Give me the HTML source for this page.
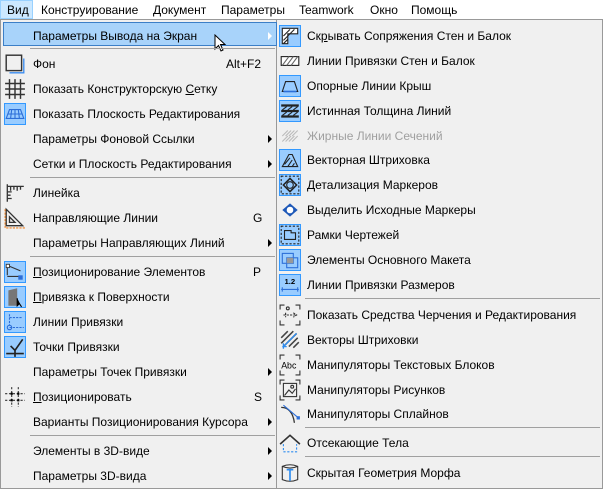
<!DOCTYPE html>
<html><head><meta charset="utf-8"><style>
*{margin:0;padding:0;box-sizing:border-box}
body{width:603px;height:487px;overflow:hidden;background:#f0f0f0;font-family:"Liberation Sans","DejaVu Sans",sans-serif;font-size:12px;color:#000;position:relative}
.bar{position:absolute;left:0;top:0;width:603px;height:19px;background:#fff}
.bar span{position:absolute;top:3px}
.vid{position:absolute;left:0;top:0;width:33px;height:19px;background:#cce8ff;border:1px solid #99d1ff}
.lm{position:absolute;left:0;top:19px;width:277px;height:470px;background:#f0f0f0;border:1px solid #999}
.sm{position:absolute;left:276px;top:19px;width:327px;height:470px;background:#f0f0f0;border:1px solid #999}
.t{position:absolute;white-space:nowrap;line-height:14px}
.sep{position:absolute;height:1px;background:#a0a0a0}
.hl{position:absolute;left:3px;top:22px;width:274px;height:24px;background:#a8d3fa;border:1px solid #3c7fc7}
.ar{position:absolute;width:0;height:0;border-top:4px solid transparent;border-bottom:4px solid transparent;border-left:4px solid #000}
.ic{position:absolute;width:22px;height:22px}
.ck{background:#99ccff;border:1px solid #3399ff}
.g{color:#a0a0a0}
u{text-decoration:underline}
</style></head><body>
<div class="bar"></div>
<div class="vid"></div>
<div class="bar" style="background:none">
<span style="left:7px">Вид</span><span style="left:41px">Конструирование</span><span style="left:153px">Документ</span><span style="left:221px">Параметры</span><span style="left:299px">Teamwork</span><span style="left:370px">Окно</span><span style="left:411px">Помощь</span>
</div>
<div class="lm"></div>
<div class="sm"></div>
<div class="hl"></div>
<div class="ar" style="left:268px;top:32px;border-left-color:#fff"></div>
<svg style="position:absolute;left:214px;top:34px" width="14" height="20" viewBox="0 0 14 20"><path d="M1 1 L1 15 L4.5 11.5 L7 17 L9 16 L6.5 10.5 L11 10.5 Z" fill="#fff" stroke="#000" stroke-width="1"/></svg>

<div class="t" style="left:33px;top:29px">Параметры Вывода на Экран</div>
<div class="sep" style="left:30px;top:48px;width:245px"></div>
<div class="t" style="left:33px;top:57px">Фон</div><div class="t" style="left:226px;top:57px">Alt+F2</div>
<div class="t" style="left:33px;top:82px">Показать Конструкторскую <u>С</u>етку</div>
<div class="t" style="left:33px;top:107px">Показать Плоскость Редактирования</div>
<div class="t" style="left:33px;top:132px">Параметры Фоновой Ссылки</div>
<div class="t" style="left:33px;top:157px">Сетки и Плоскость Редактирования</div>
<div class="sep" style="left:30px;top:177px;width:245px"></div>
<div class="t" style="left:33px;top:186px">Линейка</div>
<div class="t" style="left:33px;top:211px">Направляющие Линии</div><div class="t" style="left:253px;top:211px">G</div>
<div class="t" style="left:33px;top:236px">Параметры Направляющих Линий</div>
<div class="sep" style="left:30px;top:256px;width:245px"></div>
<div class="t" style="left:33px;top:265px"><u>П</u>озиционирование Элементов</div><div class="t" style="left:253px;top:265px">P</div>
<div class="t" style="left:33px;top:290px"><u>П</u>ривязка к Поверхности</div>
<div class="t" style="left:33px;top:315px">Линии Привязки</div>
<div class="t" style="left:33px;top:340px">Точки Привязки</div>
<div class="t" style="left:33px;top:365px">Параметры Точек Привязки</div>
<div class="t" style="left:33px;top:390px"><u>П</u>озиционировать</div><div class="t" style="left:254px;top:390px">S</div>
<div class="t" style="left:33px;top:415px">Варианты Позиционирования Курсора</div>
<div class="sep" style="left:30px;top:435px;width:245px"></div>
<div class="t" style="left:33px;top:444px">Элементы в 3D-виде</div>
<div class="t" style="left:33px;top:469px">Параметры 3D-вида</div>
<div class="ar" style="left:268px;top:135px"></div>
<div class="ar" style="left:268px;top:160px"></div>
<div class="ar" style="left:268px;top:239px"></div>
<div class="ar" style="left:268px;top:368px"></div>
<div class="ar" style="left:268px;top:418px"></div>
<div class="ar" style="left:268px;top:447px"></div>
<div class="ar" style="left:268px;top:472px"></div>

<svg class="ic" style="left:4px;top:53px" viewBox="0 0 20 20"><rect x="2" y="2" width="14" height="14" fill="none" stroke="#333" stroke-width="1.3"/><path d="M5 18 H18 V5" fill="none" stroke="#3a8cf0" stroke-width="1.2"/></svg>
<svg class="ic" style="left:4px;top:78px" viewBox="0 0 20 20"><path d="M1 5H19M1 10H19M1 15H19M5 1V19M10 1V19M15 1V19" stroke="#333" stroke-width="1.3"/></svg>
<div class="ic ck" style="left:4px;top:103px"></div>
<svg class="ic" style="left:4px;top:103px" viewBox="0 0 20 20"><path d="M5 6H15L18 14H2Z M3.5 10H16.5 M10 6V14 M7 6L6 14 M13 6L14 14" fill="none" stroke="#2d6fd8" stroke-width="1"/></svg>
<svg class="ic" style="left:4px;top:182px" viewBox="0 0 20 20"><path d="M3 2V18 M3 4H18 M6 4V8 M9 4V7 M12 4V8 M15 4V7 M3 9H7 M3 12H6 M3 15H7" fill="none" stroke="#333" stroke-width="1.2"/></svg>
<svg class="ic" style="left:4px;top:207px" viewBox="0 0 20 20"><path d="M2 2V17H17Z M5 9V14H10Z" fill="none" stroke="#333" stroke-width="1.2"/><path d="M1 2V19H19" fill="none" stroke="#f08020" stroke-dasharray="2 1"/></svg>
<div class="ic ck" style="left:4px;top:261px"></div>
<svg class="ic" style="left:4px;top:261px" viewBox="0 0 20 20"><path d="M3 4L15 9 M3 4V13 M3 14H14" stroke="#333" fill="none"/><rect x="2" y="3" width="3" height="3" fill="#fff" stroke="#333" stroke-width=".8"/><rect x="13" y="13" width="4" height="4" fill="#2d6fd8"/></svg>
<div class="ic ck" style="left:4px;top:286px"></div>
<svg class="ic" style="left:4px;top:286px" viewBox="0 0 20 20"><path d="M4 4L12 2V18H4Z" fill="#777"/><path d="M12 11V18L14 16L16 19" stroke="#000" fill="#000"/></svg>
<div class="ic ck" style="left:4px;top:311px"></div>
<svg class="ic" style="left:4px;top:311px" viewBox="0 0 20 20"><path d="M5 3V13 M5 6H17 M5 15H18" stroke="#2d6fd8" fill="none" stroke-dasharray="2 1"/><circle cx="5" cy="15" r="2" fill="none" stroke="#2d6fd8"/></svg>
<div class="ic ck" style="left:4px;top:336px"></div>
<svg class="ic" style="left:4px;top:336px" viewBox="0 0 20 20"><path d="M6 9L10 13L17 3 M2 16H18 M10 13V19" stroke="#222" stroke-width="1.5" fill="none"/></svg>
<svg class="ic" style="left:4px;top:386px" viewBox="0 0 20 20"><path d="M7 1V19 M13 1V19 M1 7H19 M1 13H19" stroke="#333" stroke-dasharray="2 1.5"/><rect x="6" y="6" width="2" height="2"/><rect x="12" y="6" width="2" height="2"/><rect x="6" y="12" width="2" height="2"/><rect x="12" y="12" width="2" height="2"/></svg>

<div class="t" style="left:307px;top:29px">Ск<u>р</u>ывать Сопряжения Стен и Балок</div>
<div class="t" style="left:307px;top:54px">Линии Привязки Стен и Балок</div>
<div class="t" style="left:307px;top:79px">Опорные Линии Крыш</div>
<div class="t" style="left:307px;top:104px">Истинная Толщина Линий</div>
<div class="t g" style="left:307px;top:129px">Жирные Линии Сечений</div>
<div class="t" style="left:307px;top:153px">Векторная Штриховка</div>
<div class="t" style="left:307px;top:178px">Детализация Маркеров</div>
<div class="t" style="left:307px;top:203px">Выделить Исходные Маркеры</div>
<div class="t" style="left:307px;top:228px">Рамки Чертежей</div>
<div class="t" style="left:307px;top:253px">Элементы Основного Макета</div>
<div class="t" style="left:307px;top:278px">Линии Привязки Размеров</div>
<div class="sep" style="left:305px;top:298px;width:295px"></div>
<div class="t" style="left:307px;top:308px">Показать Средства Черчения и Редактирования</div>
<div class="t" style="left:307px;top:333px">Векторы Штриховки</div>
<div class="t" style="left:307px;top:358px">Манипуляторы Текстовых Блоков</div>
<div class="t" style="left:307px;top:383px">Манипуляторы Рисунков</div>
<div class="t" style="left:307px;top:407px">Манипуляторы Сплайнов</div>
<div class="sep" style="left:305px;top:427px;width:295px"></div>
<div class="t" style="left:307px;top:436px">Отсекающие Тела</div>
<div class="sep" style="left:305px;top:456px;width:295px"></div>
<div class="t" style="left:307px;top:466px">Скрытая Геометрия Морфа</div>

<div class="ic ck" style="left:279px;top:25px"></div>
<svg class="ic" style="left:279px;top:25px" viewBox="0 0 20 20"><path d="M3 17V3H17V8H8V17Z" fill="#fff" stroke="#222"/><path d="M4 10L10 4M4 14L14 4M4 17L8 13" stroke="#222"/></svg>
<svg class="ic" style="left:279px;top:50px" viewBox="0 0 20 20"><rect x="2" y="6" width="16" height="8" fill="#fff" stroke="#222"/><path d="M3 14L9 6M7 14L13 6M11 14L17 6" stroke="#666"/></svg>
<div class="ic ck" style="left:279px;top:75px"></div>
<svg class="ic" style="left:279px;top:75px" viewBox="0 0 20 20"><path d="M3 15L6 6H14L17 15Z" fill="none" stroke="#222"/><path d="M4 15H16" stroke="#2d6fd8" stroke-width="1.5"/></svg>
<div class="ic ck" style="left:279px;top:100px"></div>
<svg class="ic" style="left:279px;top:100px" viewBox="0 0 20 20"><path d="M2 5H18M2 10H18M2 15H18" stroke="#222" stroke-width="2"/><path d="M3 9L7 6M8 9L12 6M13 9L17 6M3 14L7 11M8 14L12 11M13 14L17 11" stroke="#222"/></svg>
<svg class="ic" style="left:279px;top:125px" viewBox="0 0 20 20"><path d="M3 10L8 5M6 10L11 5M9 10L14 5M12 10L17 5M3 15L8 10M6 15L11 10M9 15L14 10M12 15L17 10" stroke="#bbb"/></svg>
<div class="ic ck" style="left:279px;top:149px"></div>
<svg class="ic" style="left:279px;top:149px" viewBox="0 0 20 20"><path d="M3 16L9 5H12L17 16Z" fill="none" stroke="#222"/><path d="M5 14L10 8M8 16L12 10M12 16L14 13" stroke="#222"/></svg>
<div class="ic ck" style="left:279px;top:174px"></div>
<svg class="ic" style="left:279px;top:174px" viewBox="0 0 20 20"><rect x="2" y="2" width="16" height="16" fill="none" stroke="#222" stroke-dasharray="2 1.5"/><path d="M10 4L16 10L10 16L4 10Z" fill="none" stroke="#222" stroke-width="1.4"/><circle cx="10" cy="10" r="3" fill="none" stroke="#222"/></svg>
<svg class="ic" style="left:279px;top:199px" viewBox="0 0 20 20"><path d="M10 4L17 10L10 16L3 10Z" fill="#1d58b8"/><circle cx="10" cy="10" r="3" fill="#fff"/></svg>
<div class="ic ck" style="left:279px;top:224px"></div>
<svg class="ic" style="left:279px;top:224px" viewBox="0 0 20 20"><rect x="2" y="2" width="16" height="16" fill="none" stroke="#222" stroke-dasharray="2 1.5"/><path d="M5 6H11V8H15V14H5Z" fill="none" stroke="#222"/></svg>
<div class="ic ck" style="left:279px;top:249px"></div>
<svg class="ic" style="left:279px;top:249px" viewBox="0 0 20 20"><rect x="3" y="4" width="10" height="9" fill="none" stroke="#2d6fd8"/><rect x="7" y="8" width="10" height="9" fill="none" stroke="#2d6fd8"/><rect x="7" y="8" width="6" height="5" fill="#999"/></svg>
<div class="ic ck" style="left:279px;top:274px"></div>
<svg class="ic" style="left:279px;top:274px" viewBox="0 0 20 20"><text x="5" y="9" font-size="7" font-family="Liberation Sans" font-weight="bold">1.2</text><path d="M2 14H18M3 12V16M17 12V16" stroke="#2d6fd8"/></svg>
<svg class="ic" style="left:279px;top:304px" viewBox="0 0 20 20"><path d="M1 5V1H5M15 1H19V5M19 15V19H15M5 19H1V15" stroke="#333" fill="none"/><path d="M4 10H16M13 8L16 10L13 12M6 8V12" stroke="#333" fill="none" stroke-dasharray="2 1"/><circle cx="8" cy="4" r="1.3" fill="none" stroke="#333"/></svg>
<svg class="ic" style="left:279px;top:329px" viewBox="0 0 20 20"><path d="M2 8L8 2M2 13L13 2M5 15L16 4M9 16L17 8M13 17L18 12" stroke="#444" stroke-width="1.4"/><path d="M4 16L16 4M3 16H7M4 13V18" stroke="#2d8cf0" stroke-width="1.2"/></svg>
<svg class="ic" style="left:279px;top:354px" viewBox="0 0 20 20"><path d="M1 5V1H5M15 1H19V5M19 15V19H15M5 19H1V15" stroke="#333" fill="none"/><text x="2" y="13" font-size="8" font-family="Liberation Sans">Abc</text></svg>
<svg class="ic" style="left:279px;top:379px" viewBox="0 0 20 20"><path d="M1 5V1H5M15 1H19V5M19 15V19H15M5 19H1V15" stroke="#333" fill="none"/><rect x="4" y="4" width="12" height="12" fill="none" stroke="#333"/><path d="M5 15L9 10L12 13L15 9" stroke="#333" fill="none"/><circle cx="12" cy="7" r="1.3" fill="none" stroke="#333"/></svg>
<svg class="ic" style="left:279px;top:403px" viewBox="0 0 20 20"><path d="M2 4Q12 4 14 18" stroke="#333" fill="none" stroke-width="1.2"/><path d="M4 2L17 13" stroke="#2d6fd8"/><rect x="16" y="12" width="3" height="3" fill="#2d6fd8"/></svg>
<svg class="ic" style="left:279px;top:432px" viewBox="0 0 20 20"><path d="M1 11L10 3L19 11" stroke="#333" fill="none" stroke-width="1.5"/><path d="M4 11V18H16V11" stroke="#2d8cf0" fill="none" stroke-dasharray="2 1.5"/></svg>
<svg class="ic" style="left:279px;top:462px" viewBox="0 0 20 20"><path d="M3 4Q10 1 17 4V16Q10 19 3 16Z" fill="none" stroke="#333"/><path d="M3 4Q10 7 17 4" fill="none" stroke="#333"/><path d="M7 7H13M10 7V17" stroke="#2d8cf0" stroke-width="1.5"/></svg>
</body></html>
